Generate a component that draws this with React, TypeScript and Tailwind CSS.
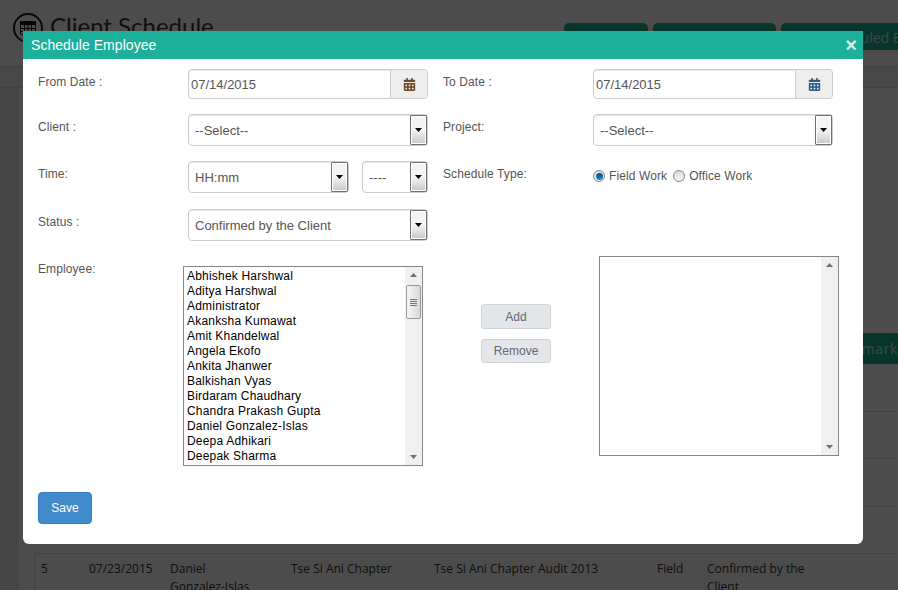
import { type ReactNode } from 'react';
import { FaCalendarAlt } from 'react-icons/fa';

const employees = [
  'Abhishek Harshwal',
  'Aditya Harshwal',
  'Administrator',
  'Akanksha Kumawat',
  'Amit Khandelwal',
  'Angela Ekofo',
  'Ankita Jhanwer',
  'Balkishan Vyas',
  'Birdaram Chaudhary',
  'Chandra Prakash Gupta',
  'Daniel Gonzalez-Islas',
  'Deepa Adhikari',
  'Deepak Sharma',
];

const tableCols = 'grid grid-cols-[48px_81px_121px_143px_223px_50px_138px_60px]';

function Label({ children, width = 'w-[150px]' }: { children: ReactNode; width?: string }) {
  return <div className={`${width} shrink-0 pt-[5px] text-[12px] tracking-[0.1px] leading-[17px] text-[#555]`}>{children}</div>;
}

function DateField({ value, iconColor }: { value: string; iconColor: string }) {
  return (
    <div className="flex h-[30px] w-[240px] rounded-[4px] border border-[#ccc] bg-white shadow-[inset_0_1px_1px_rgba(0,0,0,0.1)]">
      <div className="flex-1 pt-px pl-[2px] text-[13px] leading-[28px] text-[#555]">{value}</div>
      <div className="flex w-[37px] items-center justify-center rounded-r-[3px] border-l border-[#ccc] bg-[#eee]">
        <FaCalendarAlt className="text-[13px]" style={{ color: iconColor }} />
      </div>
    </div>
  );
}

function SelectArrow() {
  return (
    <div className="flex w-[17px] flex-col items-center rounded-[1px] border border-[#707070] bg-gradient-to-b from-[#f4f4f4] from-50% to-[#c8c8c8] shadow-[inset_0_0_0_1px_#fff]">
      <svg className="mt-auto mb-auto" width="7" height="4" viewBox="0 0 7 4">
        <polygon points="0,0 7,0 3.5,4" fill="#000" />
      </svg>
    </div>
  );
}

function SelectField({ value, width = 'w-[240px]' }: { value: string; width?: string }) {
  return (
    <div className={`flex h-[32px] ${width} rounded-[4px] border border-[#ccc] bg-white shadow-[inset_0_1px_1px_rgba(0,0,0,0.1)]`}>
      <div className="flex-1 pt-px pl-[6px] text-[13px] leading-[30px] text-[#555]">{value}</div>
      <SelectArrow />
    </div>
  );
}

function Radio({ checked }: { checked?: boolean }) {
  return (
    <span className="flex h-[12px] w-[12px] items-center justify-center rounded-full border border-[#858585] bg-gradient-to-b from-[#dcdcdc] to-[#f6f6f6]">
      {checked && <span className="h-[7px] w-[7px] rounded-full bg-gradient-to-b from-[#084a80] to-[#1c8fd0]" />}
    </span>
  );
}

function ListScrollbar({ thumb }: { thumb?: boolean }) {
  return (
    <div className="flex w-[17px] shrink-0 flex-col items-center bg-[#f0f0f0]">
      <svg className="mt-[6px]" width="7" height="4" viewBox="0 0 7 4">
        <polygon points="0,4 7,4 3.5,0" fill="#707070" />
      </svg>
      {thumb && (
        <div className="mt-[8px] flex h-[34px] w-[15px] flex-col items-center justify-center gap-px rounded-[2px] border border-[#9a9a9a] bg-gradient-to-r from-[#f6f6f6] to-[#d8d8d8]">
          <span className="h-px w-[7px] bg-[#777]" />
          <span className="h-px w-[7px] bg-[#777]" />
          <span className="h-px w-[7px] bg-[#777]" />
          <span className="h-px w-[7px] bg-[#777]" />
        </div>
      )}
      <svg className="mt-auto mb-[6px]" width="7" height="4" viewBox="0 0 7 4">
        <polygon points="0,0 7,0 3.5,4" fill="#707070" />
      </svg>
    </div>
  );
}

function ListBox({ items = [], thumb, className = '' }: { items?: string[]; thumb?: boolean; className?: string }) {
  return (
    <div className={`flex h-[200px] w-[240px] shrink-0 border border-[#828790] bg-white ${className}`}>
      <div className="flex-1 overflow-hidden pt-[2px] pl-[3px] text-[12px] tracking-[0.2px] leading-[15px] text-black">
        {items.map((name) => (
          <div key={name}>{name}</div>
        ))}
      </div>
      <ListScrollbar thumb={thumb} />
    </div>
  );
}

function BackgroundPage() {
  return (
    <div className="flex h-full flex-col bg-white font-['Open_Sans',sans-serif] text-[#333]">
      <div className="flex h-[66px] shrink-0 pl-[13px]">
        <div className="mt-[13px] flex h-[30px] w-[30px] items-center justify-center rounded-full border-2 border-[#222]">
          <svg width="16" height="14" viewBox="0 0 16 14" fill="none" stroke="#111">
            <rect x="0.5" y="0.5" width="15" height="13" rx="1" />
            <rect x="0" y="0" width="16" height="4" fill="#111" stroke="none" />
            <path d="M4.5 4v10M8 4v10M11.5 4v10M0 7.5h16M0 10.5h16" />
          </svg>
        </div>
        <h1 className="mt-[8px] ml-[7px] font-['Lato',sans-serif] text-[24px] leading-[36px]">Client Schedule</h1>
        <div className="ml-auto mt-[23px] flex h-[27px] gap-[5px] whitespace-nowrap text-[14px] text-white/80">
          <div className="w-[84px] rounded-t-[5px] bg-[#1ab394]" />
          <div className="w-[123px] rounded-t-[5px] bg-[#1ab394]" />
          <div className="-mr-[63px] w-[180px] rounded-tl-[5px] bg-[#1ab394] pl-[6px] leading-[29px]">View Scheduled Employees</div>
        </div>
      </div>
      <div className="h-[22px] shrink-0 border-y border-[#ddd] bg-[#f0f0f0]" />
      <div className="flex flex-1 overflow-hidden bg-[#ececec] pl-[19px]">
        <div className="flex-1 bg-white pt-[245px] pl-[15px]">
          <div className={`${tableCols} h-[31px] bg-[#1ab394] text-[14px] leading-[31px] tracking-[0.6px] text-white/80`}>
            <div className="col-start-8 whitespace-nowrap pl-[6px]">Remark</div>
          </div>
          <div className="h-[48px] border-b border-[#ddd]" />
          <div className="h-[47px] border-b border-[#ddd]" />
          <div className="h-[48px] border-b border-[#ddd]" />
          <div className="h-[47px] border-b border-[#ddd]" />
          <div className={`${tableCols} border-l border-[#ddd] pt-[6px] text-[12px] leading-[18px]`}>
            <div className="pl-[6px]">5</div>
            <div className="pl-[6px]">07/23/2015</div>
            <div className="pr-[30px] pl-[6px]">Daniel Gonzalez-Islas</div>
            <div className="pl-[6px]">Tse Si Ani Chapter</div>
            <div className="pl-[6px]">Tse Si Ani Chapter Audit 2013</div>
            <div className="pl-[6px]">Field</div>
            <div className="pr-[20px] pl-[6px]">Confirmed by the Client</div>
          </div>
        </div>
      </div>
    </div>
  );
}

export default function App() {
  return (
    <div className="relative h-[590px] w-[898px] overflow-hidden font-['Liberation_Sans',Arial,sans-serif]">
      <BackgroundPage />

      {/* Backdrop */}
      <div className="absolute inset-0 bg-black/70" />

      {/* Modal */}
      <div className="absolute top-[31px] left-[23px] h-[513px] w-[840px] rounded-b-[6px] bg-white">
        <div className="flex h-[28px] items-center justify-between bg-[#1cb09a] pr-[6px] pl-[8px] text-white">
          <h2 className="text-[14px] tracking-[0.05px]">Schedule Employee</h2>
          <span className="text-[20px] leading-[28px] font-bold text-[#dbeeea]">×</span>
        </div>

        <div className="pt-[10px] pl-[15px]">
          <div className="flex">
            <Label>From Date :</Label>
            <DateField value="07/14/2015" iconColor="#6e4a26" />
            <div className="w-[15px]" />
            <Label>To Date :</Label>
            <DateField value="07/14/2015" iconColor="#2c5a8c" />
          </div>

          <div className="mt-[15px] flex">
            <Label>Client :</Label>
            <SelectField value="--Select--" />
            <div className="w-[15px]" />
            <Label>Project:</Label>
            <SelectField value="--Select--" />
          </div>

          <div className="mt-[15px] flex">
            <Label>Time:</Label>
            <div className="flex w-[240px] gap-[13px]">
              <SelectField value="HH:mm" width="w-[161px]" />
              <SelectField value="----" width="w-[66px]" />
            </div>
            <div className="w-[15px]" />
            <Label>Schedule Type:</Label>
            <div className="flex h-[30px] items-center text-[12px] tracking-[0.1px] text-[#555]">
              <Radio checked />
              <span className="ml-[4px]">Field Work</span>
              <span className="ml-[6px]">
                <Radio />
              </span>
              <span className="ml-[4px]">Office Work</span>
            </div>
          </div>

          <div className="mt-[16px] flex">
            <Label>Status :</Label>
            <SelectField value="Confirmed by the Client" />
          </div>

          <div className="mt-[15px] flex">
            <Label width="w-[145px]">Employee:</Label>
            <ListBox items={employees} thumb className="mt-[10px]" />
            <div className="ml-[58px] flex w-[70px] flex-col gap-[10px] pt-[48px] text-[12px] text-[#667]">
              <button className="h-[25px] rounded-[3px] border border-[#d2d5d8] bg-[#e4e7ea]">Add</button>
              <button className="h-[24px] rounded-[3px] border border-[#d2d5d8] bg-[#e4e7ea]">Remove</button>
            </div>
            <ListBox className="ml-[48px]" />
          </div>

          <button className="mt-[26px] h-[32px] w-[54px] rounded-[4px] border border-[#357ebd] bg-[#428bca] text-[12px] text-white">
            Save
          </button>
        </div>
      </div>
    </div>
  );
}
